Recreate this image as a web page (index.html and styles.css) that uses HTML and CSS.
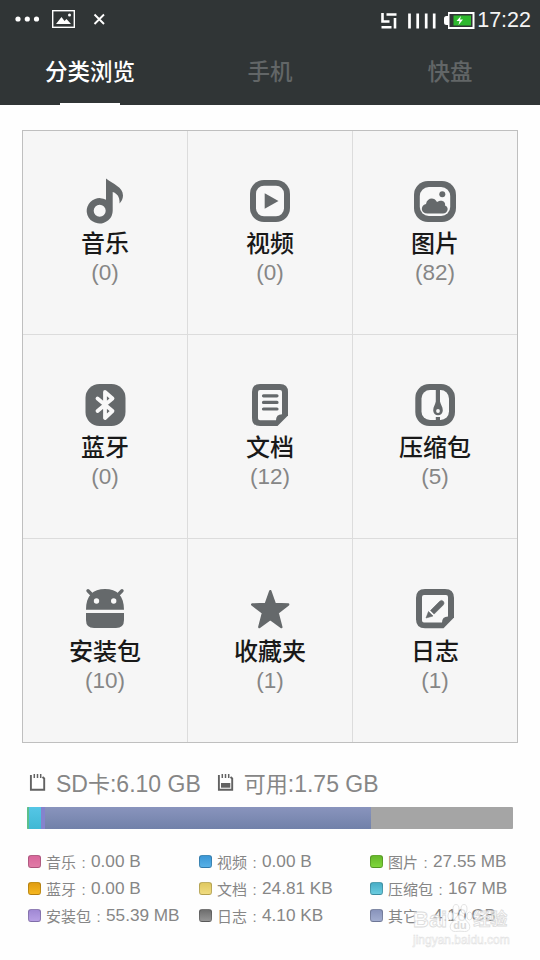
FILE: index.html
```html
<!DOCTYPE html>
<html lang="zh-CN">
<head>
    <meta charset="UTF-8">
    <meta name="viewport" content="width=device-width, initial-scale=1.0">
    <title>分类浏览</title>
    <link rel="stylesheet" href="styles.css">
</head>
<body>
    <header class="header">
        <div class="status-bar">
            <svg class="status-left" width="120" height="40" viewBox="0 0 120 40">
                <g fill="#fff">
                    <circle cx="18" cy="19" r="2.6"/>
                    <circle cx="27.3" cy="19" r="2.6"/>
                    <circle cx="36.5" cy="19" r="2.6"/>
                    <path d="M56 24l5.500-7 3 4 2-2 4.500 5z"/>
                    <circle cx="69.500" cy="15" r="1.500"/>
                </g>
                <rect x="52.700" y="10.700" width="21.600" height="16.600" fill="none" stroke="#fff" stroke-width="1.400"/>
                <path d="M94.500 14.500l9.500 9.500M104 14.500l-9.500 9.500" stroke="#fff" stroke-width="1.900"/>
            </svg>
            <div class="status-right">
                <svg width="96" height="40" viewBox="380 0 96 40">
                    <path d="M383.500 13v8.500h7M387.500 14.500h10M396 18v10.500M382.500 27.300h10" fill="none" stroke="#fff" stroke-width="2.600"/>
                    <path d="M410.500 13.500v15M418.700 13.500v15M427.200 13.500v15M435.200 13.500v15" stroke="#fff" stroke-width="2.700"/>
                    <path d="M449 12h26.500v17H449v-4h-1.500q-2.500 0-2.500-2.500v-4q0-2.500 2.500-2.500h1.500z" fill="#fff"/>
                    <rect x="450.500" y="14" width="23" height="13" fill="#303536"/>
                    <rect x="454.500" y="15.500" width="17.500" height="10" fill="#2eb82e"/>
                    <path d="M462 16l-4.500 5h3l-1 4 4.500-5.500h-3z" fill="#fff"/>
                </svg>
                <span class="clock">17:22</span>
            </div>
        </div>
        <nav class="tabs">
            <div class="tab active">分类浏览</div>
            <div class="tab">手机</div>
            <div class="tab">快盘</div>
        </nav>
    </header>

    <main class="categories">
        <div class="category">
            <svg class="icon" viewBox="0 0 44 46">
                <path d="M23 .5C30 6 40 9 40 17.500c0 3-1.500 6-3.500 8 .5-6-2-10-6.800-11.500v18.500A13 12.700 0 1 1 23 21.700zM16.700 26.700a6 6 0 1 0 0 12 6 6 0 0 0 0-12z" fill-rule="evenodd"/>
            </svg>
            <div class="name">音乐</div>
            <div class="count">(0)</div>
        </div>
        <div class="category">
            <svg class="icon" viewBox="0 0 44 46">
                <rect x="2" y="2" width="40" height="42" rx="14"/>
                <rect class="hole" x="8" y="7.700" width="28" height="30.600" rx="8"/>
                <path d="M16.700 15.300l13.800 7.700-13.800 7.700z"/>
            </svg>
            <div class="name">视频</div>
            <div class="count">(0)</div>
        </div>
        <div class="category">
            <svg class="icon" viewBox="0 0 44 46">
                <rect x="1" y="3" width="42" height="41" rx="14"/>
                <rect class="hole" x="6.800" y="9" width="30.400" height="29" rx="9"/>
                <circle cx="29.300" cy="16.300" r="3"/>
                <path d="M14.500 35.500c-7 0-7.500-8-1.500-9.500 1-6 8-7.500 11-2 5-3 9 0 8 3.500 4.500 1.500 3 8-2 8z"/>
            </svg>
            <div class="name">图片</div>
            <div class="count">(82)</div>
        </div>
        <div class="category">
            <svg class="icon" viewBox="0 0 44 46">
                <rect x="2.500" y="2" width="40" height="42" rx="14"/>
                <path class="line" d="M14.500 16.500l15 12.500-7.500 7V10l7.500 6.500-15 12.500" stroke-width="3.800" stroke-linejoin="round" stroke-linecap="round"/>
            </svg>
            <div class="name">蓝牙</div>
            <div class="count">(0)</div>
        </div>
        <div class="category">
            <svg class="icon" viewBox="0 0 44 46">
                <path d="M12 2h20q8 0 8 8v23.500L29.500 44H12q-8 0-8-8V10q0-8 8-8z"/>
                <path class="hole" d="M12 8h20q2 0 2 2v22.300q-6 0-6 6H12q-2 0-2-2V10q0-2 2-2z"/>
                <path d="M15.500 13.800h13.500M15.500 20.400h13.500M15.500 27h13.500" stroke="#65696b" stroke-width="3.200" stroke-linecap="round"/>
            </svg>
            <div class="name">文档</div>
            <div class="count">(12)</div>
        </div>
        <div class="category">
            <svg class="icon" viewBox="0 0 44 46">
                <rect x="2.300" y="2" width="39.700" height="42" rx="14"/>
                <rect class="hole" x="8.500" y="8" width="27.500" height="30" rx="8.500"/>
                <path d="M22.800 7h4.200v12.500c.5 3 2.800 5 2.800 9a4.800 4.800 0 0 1-9.600 0c0-4 2.200-6 2.600-9zM22.800 35h4.200v4h-4.200z"/>
                <circle class="hole" cx="25" cy="29" r="1.900"/>
            </svg>
            <div class="name">压缩包</div>
            <div class="count">(5)</div>
        </div>
        <div class="category">
            <svg class="icon" viewBox="0 0 44 46">
                <path d="M3 23.700C3 9.500 10 3 22 3s19 6.500 19 20.700zM3 27h38v7q0 8-8 8H11q-8 0-8-8z"/>
                <path d="M5 4.800l6 6M39 4.800l-6 6" stroke="#65696b" stroke-width="3.400" stroke-linecap="round"/>
                <circle class="hole" cx="13.500" cy="15" r="2.700"/>
                <circle class="hole" cx="30.700" cy="15" r="2.700"/>
            </svg>
            <div class="name">安装包</div>
            <div class="count">(10)</div>
        </div>
        <div class="category">
            <svg class="icon" viewBox="0 0 44 46">
                <path d="M22.300 5.200L26.800 18l13.400 .5-10.600 8.300 3.700 14.200-11-8-11 8 3.700-14.200L4.200 18.500 17.800 18z" stroke="#65696b" stroke-width="2.400" stroke-linejoin="round"/>
            </svg>
            <div class="name">收藏夹</div>
            <div class="count">(1)</div>
        </div>
        <div class="category">
            <svg class="icon" viewBox="0 0 44 46">
                <path d="M12 3h20q9 0 9 9v19.500L30.500 42.300H12q-9 0-9-9V12q0-9 9-9z"/>
                <path class="hole" d="M11 9h22q2 0 2 2v19.500q-6 0-6 6H11q-2 0-2-2V11q0-2 2-2z"/>
                <path d="M17.500 24.500l9.200-9.200q1.800-1.800 3.600 0 1.600 1.800 0 3.600l-9.200 9.200zM15.500 25.500l4.500 4.500-7 2z" stroke="#65696b" stroke-width=".6"/>
            </svg>
            <div class="name">日志</div>
            <div class="count">(1)</div>
        </div>
    </main>

    <section class="storage">
        <div class="summary">
            <svg class="card-icon" width="18" height="20" viewBox="0 0 18 20">
                <path d="M1.900 2v14.700h13.300V5.500L13.500 4" fill="none" stroke="#626262" stroke-width="1.900"/>
                <path d="M5.300 1v4M8.500 1v4M11.700 1v4" stroke="#626262" stroke-width="1.500"/>
            </svg>
            <span class="total">SD<span class="han">卡</span>:6.10 GB</span>
            <svg class="card-icon" width="18" height="20" viewBox="0 0 18 20">
                <path d="M1.900 2v14.700h13.300V5.500L13.500 4" fill="none" stroke="#626262" stroke-width="1.900"/>
                <path d="M5.300 1v4M8.500 1v4M11.700 1v4" stroke="#626262" stroke-width="1.500"/>
                <path d="M4 10h9.300v4.700H4z" fill="#626262"/>
            </svg>
            <span class="free"><span class="han">可用</span>:1.75 GB</span>
        </div>
        <div class="usage">
            <div class="used-image" style="width: 2px"></div>
            <div class="used-zip" style="width: 12px"></div>
            <div class="used-apk" style="width: 4px"></div>
            <div class="used-other" style="width: 326px"></div>
        </div>
        <div class="legend">
            <div class="item"><i class="dot pink"></i><span class="label">音乐<b>:</b></span>0.00 B</div>
            <div class="item"><i class="dot blue"></i><span class="label">视频<b>:</b></span>0.00 B</div>
            <div class="item"><i class="dot green"></i><span class="label">图片<b>:</b></span>27.55 MB</div>
            <div class="item"><i class="dot orange"></i><span class="label">蓝牙<b>:</b></span>0.00 B</div>
            <div class="item"><i class="dot yellow"></i><span class="label">文档<b>:</b></span>24.81 KB</div>
            <div class="item"><i class="dot cyan"></i><span class="label">压缩包<b>:</b></span>167 MB</div>
            <div class="item"><i class="dot purple"></i><span class="label">安装包<b>:</b></span>55.39 MB</div>
            <div class="item"><i class="dot gray"></i><span class="label">日志<b>:</b></span>4.10 KB</div>
            <div class="item"><i class="dot slate"></i><span class="label">其它<b>:</b></span>4.10 GB</div>
        </div>
    </section>

    <div class="watermark">
        <div class="brand">
            <span>Bai</span>
            <svg width="26" height="30" viewBox="0 0 26 30">
                <g fill="#fff" stroke="#d4d4d4" stroke-width=".8">
                    <ellipse cx="3.500" cy="13" rx="2.600" ry="4"/>
                    <ellipse cx="9" cy="6" rx="3" ry="4.500"/>
                    <ellipse cx="17" cy="6" rx="3" ry="4.500"/>
                    <ellipse cx="22.500" cy="13" rx="2.600" ry="4"/>
                    <path d="M13 12c4 0 4.500 4.500 7.500 7 4 3.500 2.500 10-3 9.500-3-.4-6-.4-9 0-5.500.5-7-6-3-9.500 3-2.500 3.500-7 7.500-7z"/>
                </g>
                <text x="13" y="26" class="du">du</text>
            </svg>
            <span class="han">经验</span>
        </div>
        <div class="site">jingyan.baidu.com</div>
    </div>
</body>
</html>
```
FILE: styles.css
```css
* {
    box-sizing: border-box;
}
body {
    margin: 0;
    height: 960px;
    position: relative;
    overflow: hidden;
    background: #fefefe;
    font-family: "Liberation Sans", "Noto Sans CJK SC", sans-serif;
    color: #868686;
}
svg {
    display: block;
    flex: none;
}
.header {
    height: 105px;
    background: #303536;
}
.status-bar {
    display: flex;
    justify-content: space-between;
    height: 40px;
}
.status-right {
    display: flex;
    padding-right: 9px;
}
.clock {
    margin-left: 2px;
    color: #f4f4f4;
    font-size: 21.5px;
    line-height: 41px;
}
.tabs {
    display: grid;
    grid-template-columns: repeat(3, 1fr);
    height: 65px;
}
.tab {
    display: flex;
    flex-direction: column;
    align-items: center;
    justify-content: space-between;
    font-family: "Noto Sans CJK SC", sans-serif;
    font-size: 22.5px;
    font-weight: 500;
    line-height: 61px;
    color: #626667;
}
.tab.active {
    color: #fff;
}
.tab.active::after {
    content: "";
    width: 60px;
    height: 2px;
    background: #fff;
}
.categories {
    display: grid;
    grid-template-columns: 164px 165px 165px;
    grid-template-rows: 203px 204px 204px;
    width: 496px;
    height: 613px;
    margin: 25px 22px 0;
    border: 1px solid #bfbfbf;
    background: #f6f6f6;
}
.category {
    display: flex;
    flex-direction: column;
    align-items: center;
    padding-top: 47px;
}
.category:not(:nth-child(3n+1)) {
    border-left: 1px solid #dcdcdc;
}
.category:nth-child(n+4) {
    border-top: 1px solid #dcdcdc;
}
.icon {
    width: 44px;
    height: 46px;
    fill: #65696b;
}
.icon .hole {
    fill: #f8f8f8;
}
.icon .line {
    fill: none;
    stroke: #f8f8f8;
}
.name {
    margin-top: 3px;
    font-family: "Noto Sans CJK SC", sans-serif;
    font-size: 24px;
    font-weight: 500;
    line-height: 30px;
    color: #191919;
}
.count {
    margin-top: 1px;
    font-size: 22.5px;
    line-height: 30px;
}
.storage {
    padding: 25px 27px 0;
}
.summary {
    display: flex;
    align-items: center;
    height: 30px;
    padding-left: 2px;
    font-size: 23px;
}
.card-icon {
    margin-right: 9px;
}
.total {
    margin-right: 16px;
    padding-bottom: 3px;
}
.free {
    padding-bottom: 3px;
}
.summary .han {
    font-size: 22px;
}
.usage {
    display: flex;
    height: 22px;
    margin-top: 9px;
    border-radius: 1px;
    overflow: hidden;
    background: #a5a5a5;
}
.used-image {
    background: #5cc08c;
}
.used-zip {
    background: linear-gradient(#55c6e6, #3fb8d4);
}
.used-apk {
    background: #8583cc;
}
.used-other {
    background: linear-gradient(#8994bd, #7181a9);
}
.legend {
    display: grid;
    grid-template-columns: repeat(3, 171px);
    grid-auto-rows: 27px;
    margin-top: 19px;
    padding-left: 1px;
}
.item {
    display: flex;
    align-items: center;
    font-size: 17.2px;
    white-space: nowrap;
}
.label {
    margin-top: -1px;
    font-size: 15px;
}
.label b {
    display: inline-block;
    width: 15px;
    font-weight: normal;
    text-align: center;
}
.dot {
    width: 13px;
    height: 13px;
    margin: -1px 5px 0 0;
    border: 1px solid rgba(0, 0, 0, 0.2);
    border-radius: 3px;
}
.pink { background: linear-gradient(#d9669b, #e07ba6); }
.blue { background: linear-gradient(#3b97d6, #57b0e6); }
.green { background: linear-gradient(#66b82a, #7fd63c); }
.orange { background: linear-gradient(#e09c12, #f5b720); }
.yellow { background: linear-gradient(#e0c860, #f0dc80); }
.cyan { background: linear-gradient(#48adc6, #6accdf); }
.purple { background: linear-gradient(#a088d4, #b7a0e4); }
.gray { background: linear-gradient(#6e6e6e, #969696); }
.slate { background: linear-gradient(#8893bb, #a3aed0); }

/* overlay in the bottom right corner */
.watermark {
    position: absolute;
    left: 413px;
    top: 901px;
    width: 100px;
    opacity: 0.8;
    color: #fff;
    -webkit-text-stroke: 0.8px #d4d4d4;
}
.brand {
    display: flex;
    align-items: flex-end;
    height: 32px;
    font-size: 22px;
    font-weight: bold;
    line-height: 26px;
}
.brand .han {
    font-size: 17px;
}
.du {
    font-size: 11px;
    text-anchor: middle;
    fill: #d4d4d4;
    stroke: none;
}
.site {
    font-size: 12px;
    line-height: 15px;
    -webkit-text-stroke: 0.5px #d8d8d8;
}
```
